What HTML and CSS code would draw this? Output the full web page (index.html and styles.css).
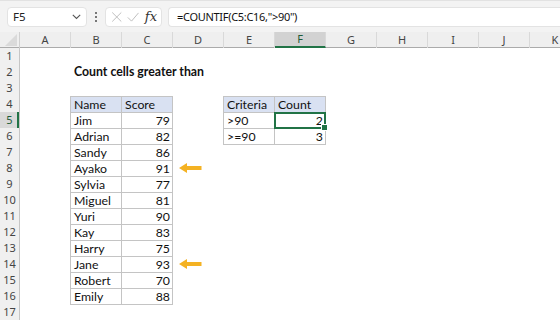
FILE: index.html
```html
<!DOCTYPE html>
<html>
<head>
<meta charset="utf-8">
<link rel="stylesheet" href="styles.css">
</head>
<body>
<div class="topbar">
  <div class="namebox">
    <span class="nb-text">F5</span>
    <svg class="chev" width="9" height="6" viewBox="0 0 9 6"><path d="M0.8 0.8 L4.5 4.5 L8.2 0.8" fill="none" stroke="#555" stroke-width="1.1"/></svg>
  </div>
  <div class="dots"><span></span><span></span><span></span></div>
  <div class="fxbox">
    <svg width="14" height="14" viewBox="0 0 14 14"><path d="M1.5 1.5 L12.5 12.5 M12.5 1.5 L1.5 12.5" stroke="#b8b8b8" stroke-width="1.1" fill="none"/></svg>
    <svg width="15" height="14" viewBox="0 0 15 14"><path d="M1 7.5 L5.5 12 L14 2" stroke="#b8b8b8" stroke-width="1.1" fill="none"/></svg>
    <span class="fx">fx</span>
  </div>
  <div class="formula">=COUNTIF(C5:C16,"&gt;90")</div>
</div>
<div class="colheads">
  <div class="corner"><svg width="12" height="12" viewBox="0 0 12 12"><path d="M12 0 L12 12 L0 12 Z" fill="#dadada"/></svg></div>
  <div class="ch">A</div><div class="ch">B</div><div class="ch">C</div><div class="ch">D</div><div class="ch">E</div><div class="ch sel">F</div><div class="ch">G</div><div class="ch">H</div><div class="ch">I</div><div class="ch">J</div><div class="ch">K</div>
</div>
<div class="sheet">
  <div class="rows">
    <div class="rh">1</div><div class="rh">2</div><div class="rh">3</div><div class="rh">4</div><div class="rh sel">5</div><div class="rh">6</div><div class="rh">7</div><div class="rh">8</div><div class="rh">9</div><div class="rh">10</div><div class="rh">11</div><div class="rh">12</div><div class="rh">13</div><div class="rh">14</div><div class="rh">15</div><div class="rh">16</div><div class="rh">17</div>
  </div>
  <div class="title">Count cells greater than</div>
  <table class="tbl data">
    <tr class="hd"><td>Name</td><td>Score</td></tr>
    <tr><td>Jim</td><td class="num">79</td></tr>
    <tr><td>Adrian</td><td class="num">82</td></tr>
    <tr><td>Sandy</td><td class="num">86</td></tr>
    <tr><td>Ayako</td><td class="num">91</td></tr>
    <tr><td>Sylvia</td><td class="num">77</td></tr>
    <tr><td>Miguel</td><td class="num">81</td></tr>
    <tr><td>Yuri</td><td class="num">90</td></tr>
    <tr><td>Kay</td><td class="num">83</td></tr>
    <tr><td>Harry</td><td class="num">75</td></tr>
    <tr><td>Jane</td><td class="num">93</td></tr>
    <tr><td>Robert</td><td class="num">70</td></tr>
    <tr><td>Emily</td><td class="num">88</td></tr>
  </table>
  <table class="tbl crit">
    <tr class="hd"><td>Criteria</td><td>Count</td></tr>
    <tr><td>&gt;90</td><td class="num active">2</td></tr>
    <tr><td>&gt;=90</td><td class="num">3</td></tr>
  </table>
  <div class="arrow a1"><svg width="23" height="10" viewBox="0 0 23 10"><path d="M0 5 L8 0 L8 3 L22.5 3 L22.5 7 L8 7 L8 10 Z" fill="#f4b223"/></svg></div>
  <div class="arrow a2"><svg width="23" height="10" viewBox="0 0 23 10"><path d="M0 5 L8 0 L8 3 L22.5 3 L22.5 7 L8 7 L8 10 Z" fill="#f4b223"/></svg></div>
</div>
</body>
</html>
```
FILE: styles.css
```css
* { box-sizing: border-box; }
html, body { margin: 0; padding: 0; background: #fff; width: 560px; height: 320px; overflow: hidden; }
body { font-family: "Noto Sans", sans-serif; }

.topbar {
  height: 32px;
  background: #f3f3f3;
  border-top: 1px solid #e2e2e2;
  display: flex;
  align-items: center;
  padding: 0 0 0 7px;
}
.namebox {
  width: 80px; height: 20px;
  background: #fff;
  border: 1px solid #e3e3e3;
  border-radius: 4px;
  display: flex; align-items: center; justify-content: space-between;
  padding: 0 5px 0 5px;
  font-size: 11.5px; color: #222;
}
.chev { margin-top: 1px; }
.dots {
  width: 18px; height: 20px;
  display: flex; flex-direction: column; align-items: center; justify-content: center; gap: 2px;
}
.dots span { width: 2px; height: 2px; background: #777; }
.fxbox {
  width: 57px; height: 20px;
  background: #fff; border: 1px solid #e3e3e3; border-radius: 4px;
  display: flex; align-items: center; gap: 4px;
  padding: 0 4px 0 5px;
}
.fx { font-family: "DejaVu Serif", "Liberation Serif", serif; font-style: italic; font-size: 13px; color: #333; margin-left: 2px; }
.formula {
  flex: 1; height: 20px; margin-left: 6px;
  background: #fff; border: 1px solid #e3e3e3; border-right: none; border-radius: 4px 0 0 4px;
  font-size: 11px; letter-spacing: -0.3px; color: #111; line-height: 18px; padding-left: 8px;
}

.colheads {
  display: grid;
  grid-template-columns: 20px repeat(11, 51px);
  height: 16px;
  background: #efefef;
  border-bottom: 1px solid #ababab;
}
.corner { display: flex; align-items: flex-end; justify-content: flex-end; padding: 0 2px 2px 0; border-right: 1px solid #d0d0d0; }
.ch {
  font-size: 11px; color: #444; text-align: center; line-height: 15px;
  border-right: 1px solid #d9d9d9;
}
.ch.sel { background: #d2d2d2; color: #1e5c38; border-bottom: 2px solid #217346; line-height: 14px; }

.sheet {
  display: grid;
  grid-template-columns: 20px repeat(11, 51px);
  grid-template-rows: repeat(17, 16px);
  font-family: "Lato", sans-serif;
  font-size: 12.3px;
  color: #111;
}
.rows { grid-column: 1; grid-row: 1 / 18; display: flex; flex-direction: column; background: #f0f0f0; border-right: 1px solid #c6c6c6; }
.rh { height: 16px; font-family: "Noto Sans", sans-serif; font-size: 11px; color: #444; text-align: center; line-height: 16px; }
.rh.sel { background: #d9d9d9; color: #1e5c38; box-shadow: inset -2px 0 0 #217346; }

.title { grid-column: 3 / 7; grid-row: 2; font-weight: 700; padding-left: 3px; line-height: 16px; font-size: 12.3px; }

.tbl { border-collapse: collapse; table-layout: fixed; width: 103px; margin-left: -1px; align-self: start; }
.tbl td { border: 1px solid #c4c4c4; height: 16px; padding: 0 2px 0 3px; line-height: 14px; white-space: nowrap; }
.tbl .hd td { background: #d9e1f2; }
.tbl .num { text-align: right; }
.data { grid-column: 3 / 5; grid-row: 4 / 17; }
.crit { grid-column: 6 / 8; grid-row: 4 / 7; }
.active { position: relative; }
.active::before {
  content: ""; position: absolute; left: -1px; top: -1px; right: -1px; bottom: -1px;
  border: 2px solid #217346;
}
.active::after {
  content: ""; position: absolute; right: -3px; bottom: -3px; width: 5px; height: 5px;
  background: #217346; border: 1px solid #fff;
}

.arrow { grid-column: 5; display: flex; align-items: center; padding-left: 6px; }
.a1 { grid-row: 8; }
.a2 { grid-row: 14; }
```
